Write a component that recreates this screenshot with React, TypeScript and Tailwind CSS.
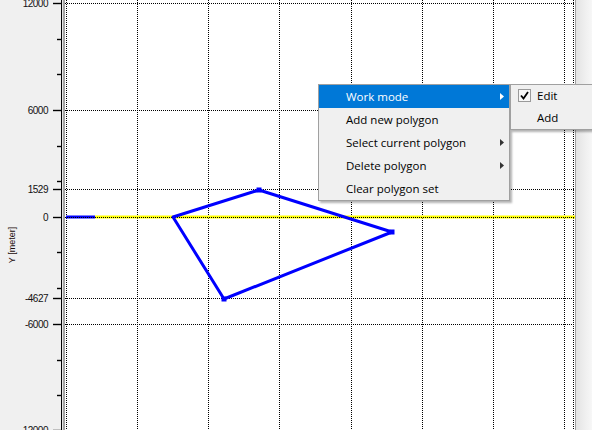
import React from 'react';
import clsx from 'clsx';

// pixel rows of the y axis ticks
const majorTicks = [
  { y: 3, label: '12000' },
  { y: 110, label: '6000' },
  { y: 189, label: '1529' },
  { y: 217, label: '0' },
  { y: 298, label: '-4627' },
  { y: 324, label: '-6000' },
  { y: 430, label: '-12000' },
];
const minorTicks = [39, 74, 146, 181, 252, 288, 360, 395];

const gridX = [1, 72, 143, 214, 286, 357, 428, 499, 508];
const gridY = [3, 110, 189, 298, 324, 430];

const polygon = [
  [108, 217],
  [194, 190],
  [327, 232],
  [159, 299],
];

const YAxis: React.FC = () => (
  <svg width={61} height={430} className="block shrink-0">
    {majorTicks.map((t) => (
      <g key={t.label}>
        <line x1={53} x2={61} y1={t.y + 0.5} y2={t.y + 0.5} stroke="#000" strokeWidth={1.4} />
        <text
          x={48}
          y={t.y + 4}
          textAnchor="end"
          fontSize={10}
          letterSpacing={-0.5}
          fontFamily='"Liberation Sans", Arial, sans-serif'
          fill="#111"
        >
          {t.label}
        </text>
      </g>
    ))}
    {minorTicks.map((y) => (
      <line key={y} x1={57} x2={61} y1={y + 0.5} y2={y + 0.5} stroke="#000" strokeWidth={1.4} />
    ))}
    <text
      transform="translate(15 245) rotate(-90)"
      textAnchor="middle"
      fontSize={9}
      fontFamily='"Liberation Sans", Arial, sans-serif'
      fill="#1a0a0a"
    >
      Y [meter]
    </text>
  </svg>
);

const Plot: React.FC = () => (
  <div className="h-[430px] w-[510px] shrink-0 bg-white">
    <svg width={510} height={430} className="block">
      {gridX.map((x) => (
        <line key={x} x1={x + 0.5} x2={x + 0.5} y1={0} y2={430} stroke="#000" strokeDasharray="1 1" />
      ))}
      {gridY.map((y) => (
        <line key={y} x1={0} x2={510} y1={y + 0.5} y2={y + 0.5} stroke="#000" strokeDasharray="1 1" />
      ))}
      <line x1={30} x2={510} y1={217} y2={217} stroke="#ffff00" strokeWidth={3} />
      <line x1={1} x2={30} y1={217} y2={217} stroke="#0000ff" strokeWidth={3} />
      <line x1={0} x2={510} y1={217.5} y2={217.5} stroke="#000" strokeDasharray="1 1" />
      <polygon
        points={polygon.map((p) => p.join(',')).join(' ')}
        fill="none"
        stroke="#0000ff"
        strokeWidth={3}
        strokeLinejoin="round"
      />
      {polygon.slice(1).map(([x, y]) => (
        <rect key={x} x={x - 2.5} y={y - 2.5} width={5} height={5} fill="#0000ff" />
      ))}
    </svg>
  </div>
);

const Arrow: React.FC<{ white?: boolean }> = ({ white }) => (
  <svg width={4} height={7} className="absolute right-[5px] top-[8px]">
    <polygon points="0,0 4,3.5 0,7" fill={white ? '#fff' : '#333'} />
  </svg>
);

const MenuItem: React.FC<{ label: string; active?: boolean; arrow?: boolean }> = ({ label, active, arrow }) => (
  <div
    className={clsx(
      'relative flex h-[23px] items-center pl-[27px]',
      active ? 'bg-[#0078d7] text-white' : 'text-black'
    )}
  >
    {label}
    {arrow && <Arrow white={active} />}
  </div>
);

const App: React.FC = () => {
  return (
    <div className="relative flex h-[430px] w-[592px] overflow-hidden bg-[#f0f0f0]">
      <YAxis />
      <div className="w-px shrink-0 bg-black" />
      <div className="w-px shrink-0 bg-[#e6e6e6]" />
      <div className="w-[2px] shrink-0 bg-[#a3a3a3]" />
      <Plot />
      <div className="w-px shrink-0 bg-[#a0a0a0]" />
      <div className="flex-1 bg-gradient-to-r from-[#e4e4e4] to-[#f7f7f7]" />

      {/* context menu */}
      <div
        className="absolute left-[318px] top-[84px] w-[192px] border border-[#a0a0a0] bg-[#f0f0f0] text-[11.5px] shadow-[2px_2px_2px_rgba(0,0,0,0.3)]"
        style={{ fontFamily: '"Open Sans", "Noto Sans", sans-serif' }}
      >
        <MenuItem label="Work mode" active arrow />
        <MenuItem label="Add new polygon" />
        <MenuItem label="Select current polygon" arrow />
        <MenuItem label="Delete polygon" arrow />
        <MenuItem label="Clear polygon set" />
      </div>

      {/* work mode submenu */}
      <div
        className="absolute left-[510px] top-[84px] w-[100px] border border-[#a0a0a0] bg-[#f0f0f0] text-[11.5px] text-black shadow-[2px_2px_2px_rgba(0,0,0,0.3)]"
        style={{ fontFamily: '"Open Sans", "Noto Sans", sans-serif' }}
      >
        <div className="relative flex h-[22px] items-center pl-[26px]">
          <div className="absolute left-[7px] top-[4px] flex h-[13px] w-[13px] items-center justify-center border border-[#9a9a9a] bg-[#f7f7f7]">
            <svg width={9} height={9} viewBox="0 0 9 9">
              <path d="M1 4.5 L3.5 7.5 L8 1" fill="none" stroke="#000" strokeWidth={1.8} />
            </svg>
          </div>
          Edit
        </div>
        <div className="flex h-[22px] items-center pl-[26px]">Add</div>
      </div>
    </div>
  );
};

export default App;
